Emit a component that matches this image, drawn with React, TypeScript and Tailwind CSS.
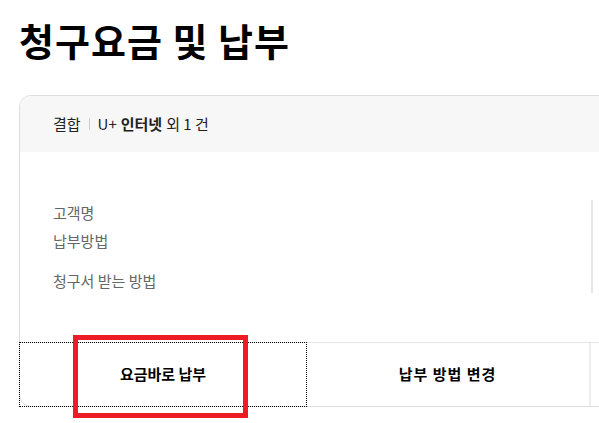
import React from "react";

export default function App() {
  return (
    <div
      className="relative w-[599px] h-[423px] overflow-hidden bg-white text-[#111]"
      style={{ fontFamily: '"Noto Sans CJK KR", "Noto Sans", sans-serif' }}
    >
      <h1 className="pl-[19px] pt-[17px] text-[38px] leading-[46px] font-bold tracking-[1px] text-black">
        청구요금 및 납부
      </h1>
      <div className="ml-[19px] mt-[32px] w-[660px] border border-[#dddddd] rounded-[12px]">
        <div className="h-[56px] bg-[#f7f7f7] rounded-t-[11px] flex items-center pl-[33px] text-[15px] text-[#222]">
          <span>결합</span>
          <span className="mx-[8px] w-px h-[12px] bg-[#cccccc]" />
          <span>U+</span>
          <span className="ml-[4px] font-bold">인터넷</span>
          <span className="ml-[4px]">외 1 건</span>
        </div>
        <div className="h-[190px] pt-[48px] flex">
          <div className="w-[571px] pl-[33px] text-[15px] text-[#666]">
            <div className="h-[27px] flex items-center">고객명</div>
            <div className="h-[28px] flex items-center">납부방법</div>
            <div className="mt-[12px] h-[28px] flex items-center">청구서 받는 방법</div>
          </div>
          <div className="h-[93px] border-l-2 border-[#e5e5e5]" />
        </div>
        <div className="flex border-t border-[#e5e5e5] h-[64px]">
          <button className="w-[286px] h-[63px] flex items-center justify-center text-[15px] font-bold text-black outline-1 outline-dotted outline-black">
            요금바로 납부
          </button>
          <button className="w-[285px] h-[63px] flex items-center justify-center text-[15px] font-bold tracking-[1px] text-black border-r-2 border-[#eeeeee]">
            납부 방법 변경
          </button>
          <div className="flex-1" />
        </div>
      </div>
      <div className="absolute left-[73px] top-[335px] w-[175px] h-[83px] border-[5px] border-[#ed1c24]" />
    </div>
  );
}
